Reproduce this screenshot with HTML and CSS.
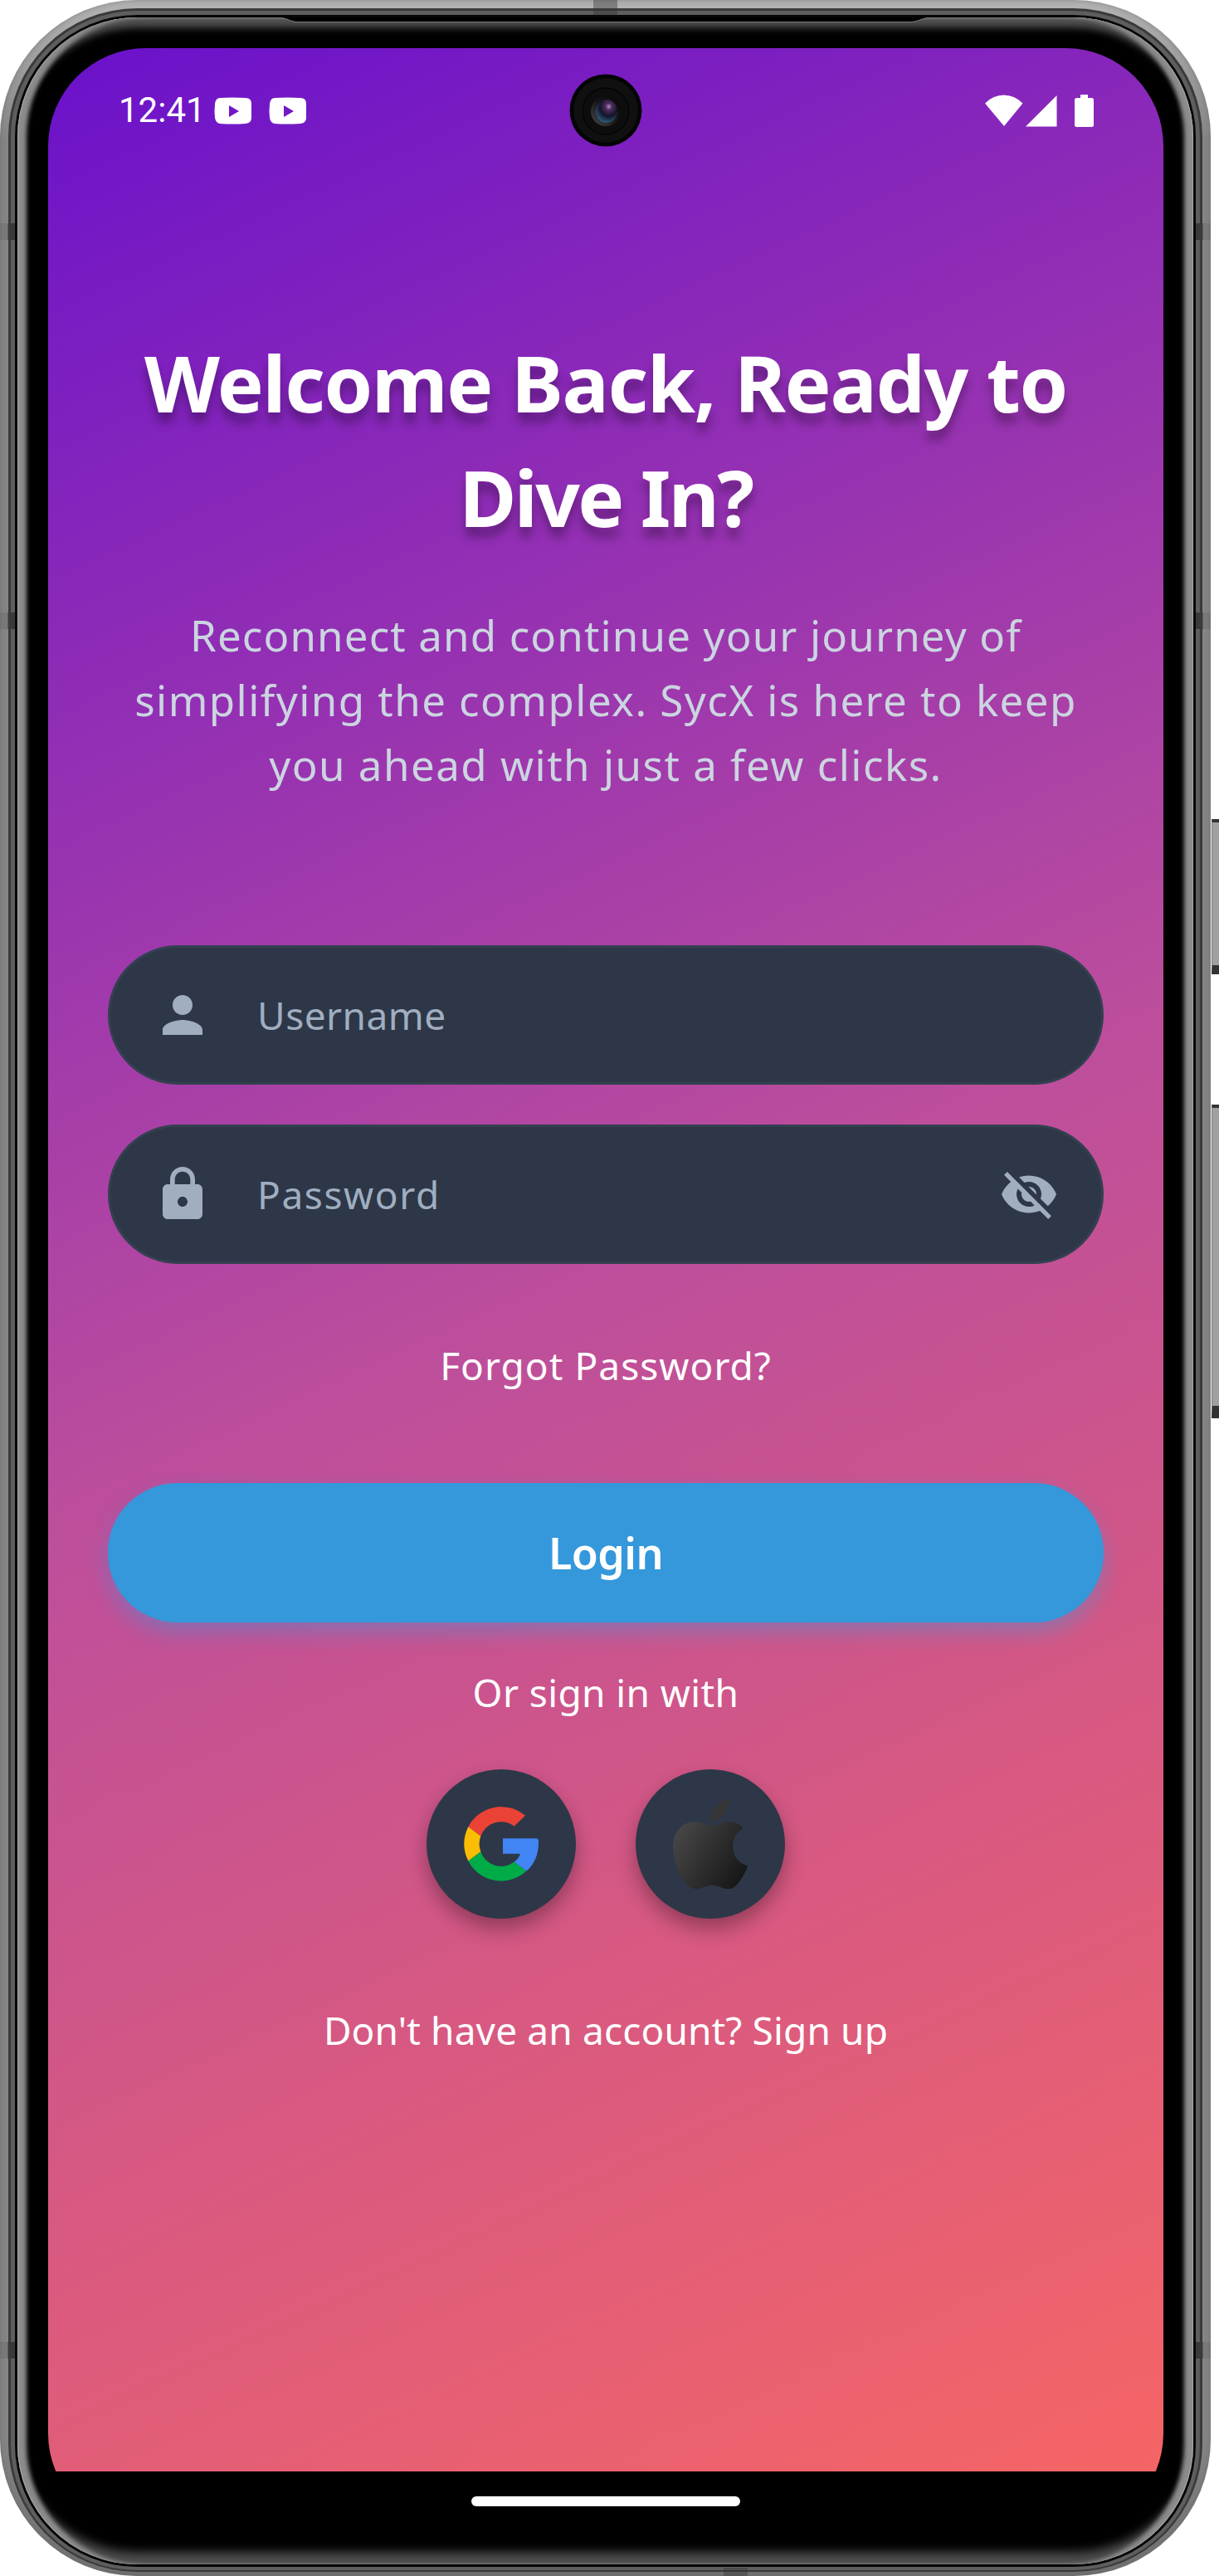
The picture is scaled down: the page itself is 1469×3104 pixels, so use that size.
FILE: index.html
```html
<!DOCTYPE html>
<html lang="en">
<head>
<meta charset="utf-8">
<title>SycX Login</title>
<link rel="stylesheet" href="styles.css">
</head>
<body>
<div class="phone">
  <i class="side-button power"></i>
  <i class="side-button volume"></i>
  <div class="ring ring-dark"><div class="ring ring-mid"><div class="ring ring-black">
    <div class="glass">
      <svg class="earpiece" viewBox="0 0 785 7"><path d="M0 0H785C775 0 770 5 762 5H22C14 5 10 0 0 0Z" fill="#000"/><path d="M0 .5C10 .5 14 5.500 22 5.500H762C770 5.500 775 .5 785 .5" fill="none" stroke="#777"/></svg>
      <div class="screen">
        <main class="app">
          <header class="status">
            <span class="time">12:41</span>
            <svg class="tube" viewBox="0 0 45 33"><path fill="#fff" fill-rule="evenodd" d="M7 1Q22 0 38 1Q45 1 45 8V25Q45 31 38 32Q22 33 7 32Q2 31 1 25Q0 17 1 8Q2 1 7 1ZM18 10V24L30 17Z"/></svg>
            <svg class="tube" viewBox="0 0 45 33"><path fill="#fff" fill-rule="evenodd" d="M7 1Q22 0 38 1Q45 1 45 8V25Q45 31 38 32Q22 33 7 32Q2 31 1 25Q0 17 1 8Q2 1 7 1ZM18 10V24L30 17Z"/></svg>
            <svg class="signals" viewBox="0 0 131 39" fill="#fff"><path d="M0 10.500Q10 .5 22.700 .5T45.500 10.500L23 38Z"/><path d="M86.500 1V38.500H49Z"/><path d="M115 0H124V4H128.500Q131 4 131 6.500V36.500Q131 39 128.500 39H110.500Q108 39 108 36.500V6.500Q108 4 110.500 4H115Z"/></svg>
          </header>
          <svg class="camera" viewBox="0 0 88 88">
            <defs>
              <radialGradient id="lens" cx=".6" cy=".3" r=".75"><stop offset="0" stop-color="#b58ac4"/><stop offset=".2" stop-color="#4b2e5c"/><stop offset=".55" stop-color="#14142a"/><stop offset="1" stop-color="#2c6684"/></radialGradient>
              <linearGradient id="rim" x1="1" y1="0" x2="0" y2="1"><stop offset="0" stop-color="#050505"/><stop offset=".5" stop-color="#171717"/><stop offset="1" stop-color="#4a4a4a"/></linearGradient>
            </defs>
            <circle cx="44" cy="44" r="43.500" fill="#030303"/><circle cx="44" cy="44" r="39" fill="#101010"/>
            <circle cx="44" cy="45" r="28" fill="#0d0d0d" stroke="#050505" stroke-width="1.500"/>
            <circle cx="44" cy="45" r="18" fill="url(#rim)"/><ellipse cx="45" cy="45" rx="13" ry="14" fill="url(#lens)"/>
          </svg>
          <h1 class="title"><span class="t1">Welcome Back, Ready to</span><span class="t2">Dive In?</span></h1>
          <p class="intro"><span class="p1">Reconnect and continue your journey of</span><span class="p2">simplifying the complex. SycX is here to keep</span><span class="p3">you ahead with just a few clicks.</span></p>
          <form class="form">
            <div class="field">
              <svg class="icon" viewBox="0 0 24 24"><path d="M12 12c2.210 0 4-1.790 4-4s-1.790-4-4-4-4 1.790-4 4 1.790 4 4 4zm0 2c-2.670 0-8 1.340-8 4v2h16v-2c0-2.660-5.330-4-8-4z"/></svg>
              <span class="label user">Username</span>
            </div>
            <div class="field">
              <svg class="icon" viewBox="0 0 24 24"><path d="M18 8h-1V6c0-2.760-2.240-5-5-5S7 3.240 7 6v2H6c-1.100 0-2 .9-2 2v10c0 1.100.9 2 2 2h12c1.100 0 2-.9 2-2V10c0-1.100-.9-2-2-2zm-6 9c-1.100 0-2-.9-2-2s.9-2 2-2 2 .9 2 2-.9 2-2 2zm3.100-9H8.900V6c0-1.710 1.390-3.100 3.100-3.100 1.710 0 3.100 1.390 3.100 3.100v2z"/></svg>
              <span class="label pass">Password</span>
              <svg class="icon" viewBox="0 0 24 24"><path d="M12 7c2.760 0 5 2.240 5 5 0 .65-.13 1.260-.36 1.830l2.920 2.920c1.510-1.260 2.700-2.890 3.430-4.750-1.730-4.390-6-7.500-11-7.500-1.400 0-2.740.25-3.980.7l2.160 2.160C10.740 7.130 11.350 7 12 7zM2 4.270l2.280 2.280.46.46C3.080 8.300 1.780 10.020 1 12c1.730 4.390 6 7.500 11 7.500 1.550 0 3.030-.3 4.380-.84l.42.42L19.730 22 21 20.730 3.270 3 2 4.270zM7.530 9.800l1.550 1.550c-.05.21-.08.43-.08.65 0 1.660 1.340 3 3 3 .22 0 .44-.03.65-.08l1.550 1.550c-.67.33-1.410.53-2.200.53-2.760 0-5-2.240-5-5 0-.79.2-1.530.53-2.200zm4.310-.78l3.150 3.150.02-.16c0-1.660-1.340-3-3-3l-.17.010z"/></svg>
            </div>
            <a class="link forgot">Forgot Password?</a>
            <button class="login" type="button">Login</button>
          </form>
          <p class="link or">Or sign in with</p>
          <div class="socials">
            <div class="social">
              <svg class="google" viewBox="237 262 270 269">
                <path fill="#ea4335" d="M459 294L419 332A78 78 0 0 0 298 368L253 334A134 134 0 0 1 459 294Z"/>
                <path fill="#fbbc04" d="M253 334L298 368A78 78 0 0 0 298 424L253 458A134 134 0 0 1 253 334Z"/>
                <path fill="#00ac47" d="M253 458L298 424A78 78 0 0 0 419 461L463 494A134 134 0 0 1 253 458Z"/>
                <path fill="#4285f4" d="M378 376H498Q507 376 507 386C508 430 494 468 463 494L419 461Q437 448 441 432H378Z"/>
              </svg>
            </div>
            <div class="social">
              <svg class="apple" viewBox="993 234 270 324">
                <defs><linearGradient id="steel" x1="0" y1=".25" x2="1" y2=".8"><stop offset="0" stop-color="#464646"/><stop offset="1" stop-color="#151515"/></linearGradient></defs>
                <path fill="url(#steel)" d="M1134 331C1152 331 1170 316 1197 316C1216 316 1235 324 1247 338C1222 353 1209 378 1209 405C1209 438 1230 466 1263 475C1256 497 1240 527 1222 545C1212 555 1203 558 1192 558C1172 558 1158 545 1134 545C1110 545 1096 558 1076 558C1064 558 1055 553 1044 542C1012 507 993 456 993 408C993 352 1028 316 1072 316C1098 316 1116 331 1134 331Z"/>
                <path fill="#363636" d="M1128 314C1128 275 1160 240 1196 234C1198 272 1166 312 1128 314Z"/>
              </svg>
            </div>
          </div>
          <p class="link signup">Don't have an account? Sign up</p>
        </main>
        <footer class="navbar"><i class="handle"></i></footer>
      </div>
    </div>
  </div></div></div>
  <i class="band band-left band-upper"></i>
  <i class="band band-left band-mid"></i>
  <i class="band band-left band-lower"></i>
  <i class="band band-right band-upper"></i>
  <i class="band band-right band-mid"></i>
  <i class="band band-right band-lower"></i>
  <i class="band band-top"></i>
  <i class="band band-bottom"></i>
</div>
</body>
</html>
```
FILE: styles.css
```css
* { box-sizing: border-box; }
body { margin: 0; background: #fff; font-family: "Noto Sans", sans-serif; color: #fff; }
h1, p { margin: 0; }
svg { display: block; flex: none; }

/* device shell */
.phone { position: relative; width: 1459px; height: 3104px; padding: 10px 10px 5px; border-radius: 165px;
  background: linear-gradient(#b4b4b4, #858585 170px, #858585 2940px, #707070); box-shadow: inset 0 0 8px -2px #666; }
.ring { height: 100%; }
.ring-dark { padding: 3px 3px 2px; border-radius: 155px; background: #3a3a3a; }
.ring-mid { padding: 5px 5px 4px; border-radius: 152px; background: #5e5e5e; }
.ring-black { padding: 3px; border-radius: 147px; background: #060606; }
.glass { position: relative; height: 100%; padding: 37px 36px 40px 37px; border-radius: 144px; background: #000;
  box-shadow: inset 1px 0 0 #aaa, inset -1px 0 0 #aaa, inset 0 1px 0 #777,
    inset 12px 0 5px -1px #8c8c8c, inset -12px 0 5px -1px #8c8c8c,
    inset 0 15px 10px -3px #525252, inset 0 -18px 12px -3px #4c4c4c; }
.earpiece { position: absolute; left: 315px; top: 0; width: 785px; height: 7px; }
.side-button { position: absolute; left: 1460px; width: 9px; background: #a0a0a0;
  border: solid #333; border-width: 4px 0 11px 1px; border-left-color: #777; }
.power { top: 987px; height: 187px; }
.volume { top: 1331px; height: 378px; border-bottom-width: 15px; }
.band { position: absolute; }
.band-left, .band-right { width: 18px; height: 20px; }
.band-left { left: 0; background: linear-gradient(90deg, rgba(60, 60, 60, .15) 9px, #3a3a3a 10px); }
.band-right { right: 0; background: linear-gradient(270deg, rgba(60, 60, 60, .15) 9px, #3a3a3a 10px); }
.band-upper { top: 269px; }
.band-mid { top: 738px; }
.band-lower { top: 2822px; }
.band-top, .band-bottom { width: 29px; height: 18px; background: rgba(50, 50, 50, .4); }
.band-top { left: 715px; top: 0; }
.band-bottom { left: 872px; bottom: 0; height: 10px; }

/* display */
.screen { height: 100%; display: flex; flex-direction: column; border-radius: 118px; overflow: hidden; background: #000; }
.app { position: relative; height: 2920px; display: flex; flex-direction: column; align-items: center;
  background: linear-gradient(155.3deg, #6a11cb, #bc4e9c 50%, #f56565); }
.status { width: 100%; height: 150px; padding: 0 84px 0 85px; display: flex; align-items: center; font: 42px/1 Roboto, sans-serif; }
.time { width: 115px; }
.tube { width: 45px; height: 33px; margin-right: 21px; }
.signals { width: 131px; height: 39px; margin-left: auto; }
.camera { position: absolute; left: 628px; top: 31px; width: 88px; height: 88px; }
.title { margin-top: 184px; font-size: 94px; line-height: 138px; font-weight: 700; text-align: center;
  text-shadow: 0 12px 12px rgba(0, 0, 0, .3); }
.title span, .intro span { display: block; white-space: nowrap; }
.t1 { letter-spacing: -1.3px; }
.t2 { letter-spacing: -2.6px; }
.intro { margin-top: 58px; font-size: 51px; line-height: 78px; color: #cbd5e0; text-align: center; }
.p1 { letter-spacing: 1.15px; }
.p2 { letter-spacing: 1.45px; }
.p3 { letter-spacing: 1.5px; }
.form { width: 1200px; margin-top: 179px; display: flex; flex-direction: column; align-items: center; }
.field { width: 100%; height: 168px; margin-bottom: 48px; padding: 0 51px; display: flex; align-items: center;
  border: 3px solid #344050; border-radius: 84px; background: #2d3748; }
.icon { width: 72px; height: 72px; fill: #a0aec0; }
.label { flex: 1; margin-left: 54px; font-size: 46px; color: #a0aec0; }
.user { letter-spacing: .5px; }
.pass { letter-spacing: 1.6px; }
.link { font-size: 46px; line-height: 60px; white-space: nowrap; }
.forgot { margin-top: 44px; letter-spacing: 1.05px; }
.login { width: 1200px; height: 168px; margin-top: 112px; border: 0; border-radius: 84px; background: #3498db; color: #fff;
  font: 600 52px/1 "Noto Sans", sans-serif; letter-spacing: -.6px; box-shadow: 0 12px 24px rgba(52, 152, 219, .4); }
.or { margin-top: 54px; letter-spacing: .4px; }
.socials { display: flex; gap: 72px; margin-top: 63px; }
.social { width: 180px; height: 180px; display: flex; align-items: center; justify-content: center; border-radius: 50%;
  background: #2d3748; box-shadow: 0 12px 24px rgba(0, 0, 0, .32); }
.google { width: 90px; height: 90px; }
.apple { width: 90px; height: 108px; }
.signup { margin-top: 104px; letter-spacing: .15px; }
.navbar { height: 72px; display: flex; align-items: center; justify-content: center; }
.handle { width: 324px; height: 12px; border-radius: 6px; background: #fff; }
```
